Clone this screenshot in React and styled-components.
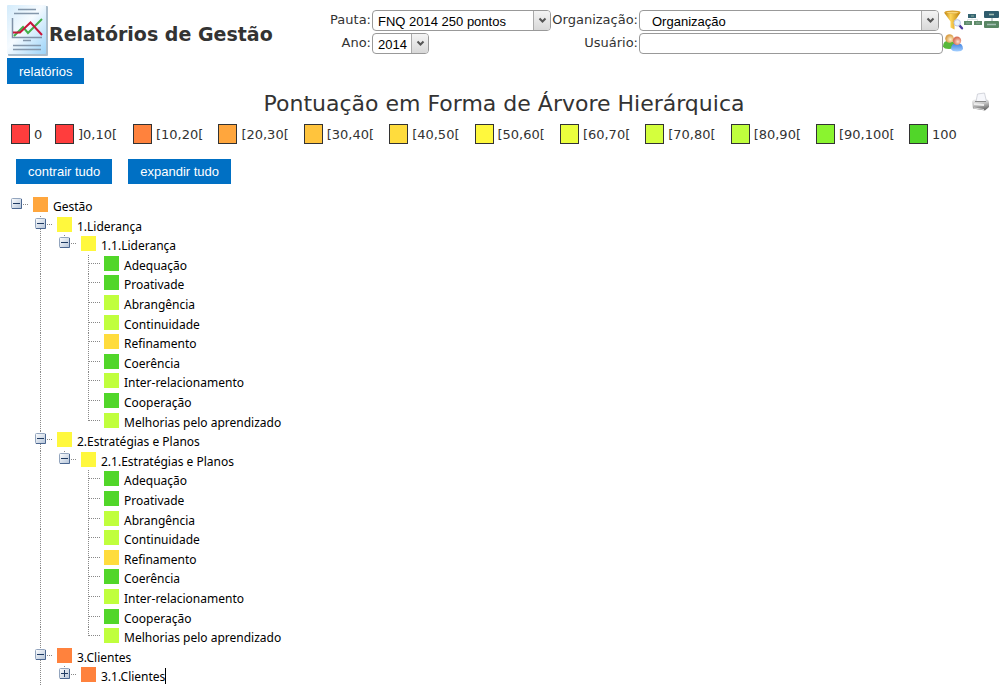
import React, { useState } from 'react';
import styled, { createGlobalStyle } from 'styled-components';

const GlobalStyle = createGlobalStyle`
    body {
        margin: 0;
        background-color: #fff;
        color: #333;
        font-family: Verdana, 'DejaVu Sans', sans-serif;
        font-size: 13px;
    }

    * {
        box-sizing: border-box;
    }
`;

const Page = styled.div`
    padding: 5px 0 0 7px;
`;

const Header = styled.header`
    display: grid;
    grid-template-columns: 320px 1fr;
`;

const Brand = styled.div`
    display: flex;
    align-items: flex-start;
    gap: 1px;
    height: 53px;
`;

const BrandTitle = styled.h1`
    margin: 17px 0 0;
    font-size: 19px;
    line-height: 24px;
    white-space: nowrap;
`;

const Fields = styled.div`
    display: grid;
    grid-template-columns: 44px 181px 86px 1fr;
    grid-auto-rows: 21px;
    gap: 2px 0;
    padding-top: 5px;
`;

const FieldLabel = styled.label`
    line-height: 20px;
    text-align: right;
    white-space: nowrap;
`;

const FieldCell = styled.div`
    display: flex;
    min-width: 0;
    padding-left: 1px;
`;

const SelectBox = styled.div`
    position: relative;
    height: 21px;
    flex: ${(p) => (p.$grow ? '1' : 'none')};
    width: ${(p) => p.$width || 'auto'};
`;

const Select = styled.select`
    appearance: none;
    width: 100%;
    height: 21px;
    margin: 0;
    padding: 1px 20px 0 ${(p) => (p.$indent ? '12px' : '5px')};
    border: 1px solid #999;
    border-radius: 4px;
    background-color: #fff;
    color: #000;
    font-family: 'Liberation Sans', Arial, sans-serif;
    font-size: 13px;
`;

const SelectArrow = styled.span`
    position: absolute;
    top: 1px;
    right: 1px;
    bottom: 1px;
    display: flex;
    align-items: center;
    justify-content: center;
    width: 17px;
    border-left: 1px solid #aaa;
    border-radius: 0 3px 3px 0;
    background: linear-gradient(#f4f4f4, #d8d8d8);
    pointer-events: none;
`;

const TextInput = styled.input`
    flex: 1;
    min-width: 0;
    height: 21px;
    border: 1px solid #999;
    border-radius: 4px;
    background-color: #fff;
`;

const IconGroup = styled.div`
    display: flex;
    align-items: center;
    height: 19px;
    width: ${(p) => p.$width};
    justify-content: ${(p) => (p.$end ? 'flex-end' : 'flex-start')};
`;

const IconButton = styled.button`
    display: flex;
    padding: 0;
    border: none;
    background: none;
    cursor: pointer;
`;

const Button = styled.button`
    height: ${(p) => (p.$menu ? '26px' : '25px')};
    padding: 0 12px;
    border: none;
    background-color: #0070c4;
    color: #fff;
    font-family: 'Liberation Sans', Arial, sans-serif;
    font-size: 13px;
    cursor: pointer;

    &:hover {
        background-color: #005a9e;
    }
`;

const Menu = styled.nav`
    display: flex;
`;

const TitleBar = styled.div`
    display: grid;
    grid-template-columns: 30px 1fr 30px;
    align-items: center;
    height: 40px;
`;

const Title = styled.h2`
    grid-column: 2;
    margin: 0;
    font-size: 22px;
    font-weight: normal;
    line-height: 28px;
    text-align: center;
`;

const PrintLink = styled(IconButton)`
    align-self: start;
    padding-top: 8px;
`;

const Legend = styled.ul`
    display: grid;
    grid-template-columns: 44px 78px repeat(8, 1fr) 93px 85px;
    margin: 0;
    padding: 0 7px 0 4px;
    list-style: none;
`;

const LegendItem = styled.li`
    display: flex;
    align-items: center;
    gap: 4px;
    height: 20px;
    white-space: nowrap;
`;

const LegendColor = styled.span`
    flex: none;
    width: 19px;
    height: 20px;
    border: 1px solid #333;
    background-color: ${(p) => p.$color};
`;

const Actions = styled.div`
    display: flex;
    gap: 16px;
    padding: 15px 9px 12px;
`;

const Tree = styled.ul`
    margin: 0;
    padding: 0 0 0 4px;
    list-style: none;
    color: #000;
    font-family: Tahoma, 'Noto Sans', sans-serif;
    font-size: 12px;
`;

const TreeRow = styled.li`
    display: flex;
    height: 20px;

    &:nth-child(5n + 2),
    &:nth-child(5n + 4) {
        height: 19px;
    }
`;

const IndentCell = styled.span`
    flex: none;
    display: flex;
    width: 24px;
    padding-left: 5px;
`;

const DottedV = styled.span`
    width: 1px;
    flex: ${(p) => p.$size || '1'};
    height: ${(p) => p.$height || 'auto'};
    background: ${(p) => (p.$hidden ? 'none' : 'linear-gradient(#888 1px, transparent 1px) 0 0 / 1px 2px')};
`;

const DottedH = styled.span`
    width: ${(p) => p.$width};
    height: 1px;
    margin-top: 8px;
    background: linear-gradient(90deg, #888 1px, transparent 1px) 0 0 / 2px 1px;
`;

const ToggleCell = styled.span`
    flex: none;
    display: flex;
    width: 22px;
`;

const ToggleColumn = styled.span`
    display: flex;
    flex-direction: column;
    align-items: center;
    width: 11px;
    margin-right: 1px;
`;

const Toggle = styled.button`
    display: flex;
    flex: none;
    width: 11px;
    height: 11px;
    padding: 0;
    border: none;
    background: none;
    cursor: pointer;
`;

const LeafCell = styled.span`
    flex: none;
    display: flex;
    width: 21px;
    padding-left: 5px;
`;

const NodeColor = styled.span`
    flex: none;
    width: 15px;
    height: 15px;
    margin: 1px 5px 0 0;
    background-color: ${(p) => p.$color};
`;

const NodeText = styled.span`
    line-height: 22px;
    white-space: nowrap;
`;

const Caret = styled.span`
    width: 1px;
    height: 16px;
    margin-top: 2px;
    background-color: #000;
`;

const ReportIcon = () => (
    <svg width="41" height="52" viewBox="0 0 41 52" aria-hidden="true">
        <defs>
            <linearGradient id="paper" x1="0" y1="0" x2="1" y2="1">
                <stop offset="0" stopColor="#d3ebfb" />
                <stop offset=".45" stopColor="#f6fbff" />
                <stop offset="1" stopColor="#9bd3f8" />
            </linearGradient>
        </defs>
        <rect x="1" y="1" width="40" height="50" rx="1" fill="#a9bccb" />
        <rect x="0" y="0" width="39" height="49" rx="1" fill="url(#paper)" />
        <path d="M11 4.500h18M7 8.500h25M16 35.500h8M6 40.500h28M6 44.500h28" stroke="#8497ab" strokeWidth="1.500" />
        <path d="M5.500 13v19.500H35" fill="none" stroke="#8092a8" strokeWidth="1.500" />
        <path d="M7 31l9-9 5 6 14-14" fill="none" stroke="#43b049" strokeWidth="2" />
        <path d="M6 27.500h7l10.500-10L35 30" fill="none" stroke="#c9153a" strokeWidth="2" />
    </svg>
);

const FilterIcon = () => (
    <svg width="20" height="20" viewBox="0 0 20 20" aria-hidden="true">
        <defs>
            <linearGradient id="funnel">
                <stop offset="0" stopColor="#b47b0a" />
                <stop offset=".4" stopColor="#ffd65a" />
                <stop offset="1" stopColor="#b87d08" />
            </linearGradient>
        </defs>
        <path d="M0 2.500l6.500 9v6l4 2v-8l6-9z" fill="url(#funnel)" />
        <ellipse cx="8.500" cy="2.300" rx="8" ry="1.700" fill="#d9a02b" />
        <ellipse cx="8.500" cy="2.600" rx="6" ry=".9" fill="#f7d77c" />
        <path d="M15.500 15.500l2.500 2.800" stroke="#4d3c9d" strokeWidth="2.400" strokeLinecap="round" />
        <circle cx="13.200" cy="12.800" r="3.200" fill="#e7f3ff" stroke="#b9c6e8" />
    </svg>
);

const OrgIcon = () => (
    <svg width="20" height="20" viewBox="0 0 20 20" aria-hidden="true">
        <path d="M8 8v2M3.500 11v-1.500h10V11" fill="none" stroke="#dbe4e4" />
        <rect x="4" y="4" width="8" height="4" fill="#356572" />
        <rect x="0" y="11" width="8" height="4" fill="#5e8b68" />
        <rect x="10" y="11" width="8" height="4" fill="#5e8b68" />
        <path d="M7 6h3M2 13h4M12 13h4" stroke="#8fae9f" />
    </svg>
);

const OrgLargeIcon = () => (
    <svg width="17" height="20" viewBox="0 0 17 20" aria-hidden="true">
        <path d="M8 7v5" stroke="#8ba2a0" />
        <rect x="0" y="1" width="15" height="7" rx="1" fill="#2f5c6c" />
        <rect x="0" y="11" width="15" height="7" rx="1" fill="#588663" />
        <path d="M5 4.500h5M3 14.500h9" stroke="#a3bfb3" strokeWidth="1.500" />
    </svg>
);

const UsersIcon = () => (
    <svg width="20" height="18" viewBox="0 0 20 18" aria-hidden="true">
        <defs>
            <radialGradient id="face" cx=".6" cy=".6">
                <stop offset="0" stopColor="#fff0cf" />
                <stop offset="1" stopColor="#dba24d" />
            </radialGradient>
            <radialGradient id="faceFront" cx=".6" cy=".6">
                <stop offset="0" stopColor="#ffe0cf" />
                <stop offset="1" stopColor="#d9735a" />
            </radialGradient>
            <linearGradient id="blueShirt" x1="0" y1="0" x2="0" y2="1">
                <stop offset="0" stopColor="#3d7fe0" />
                <stop offset="1" stopColor="#a4d0ff" />
            </linearGradient>
        </defs>
        <path d="M0 12.500q0-6 6-6t6 6q-1 2.500-6 2.500t-6-2.500z" fill="#57b83c" />
        <circle cx="6.500" cy="4.500" r="4.300" fill="url(#face)" />
        <path d="M8 15q0-6 6-6t6 6q-1 2.500-6 2.500T8 15z" fill="url(#blueShirt)" />
        <circle cx="14" cy="6.800" r="4.200" fill="url(#faceFront)" />
    </svg>
);

const PrinterIcon = () => (
    <svg width="19" height="20" viewBox="0 0 19 20" aria-hidden="true">
        <defs>
            <linearGradient id="printer" x1="0" y1="0" x2=".3" y2="1">
                <stop offset="0" stopColor="#f4f4f4" />
                <stop offset=".5" stopColor="#c4c4c4" />
                <stop offset="1" stopColor="#6e6e6e" />
            </linearGradient>
        </defs>
        <path d="M1 10q0-2 3-2.500h12q2 .5 2 3V15l-4 3.500L2 16.500z" fill="url(#printer)" />
        <path d="M5 9.500L6.500 2l7-1 2 8.500z" fill="#f6f7fb" stroke="#c3c5ce" strokeWidth=".7" />
        <path d="M4 9.500h11" stroke="#8a8a8a" />
        <path d="M3 12l10 1" stroke="#ededed" strokeWidth="2" />
        <path d="M3 16l10 1.500" stroke="#dcdcdc" />
    </svg>
);

const ToggleIcon = ({ open }) => (
    <svg width="11" height="11" viewBox="0 0 11 11" aria-hidden="true">
        <defs>
            <linearGradient id="toggle" x1="0" y1="0" x2="1" y2="1">
                <stop offset="0" stopColor="#fff" />
                <stop offset="1" stopColor="#b3c3d8" />
            </linearGradient>
        </defs>
        <rect x=".5" y=".5" width="10" height="10" rx="1" fill="url(#toggle)" stroke="#93a5be" />
        <path d="M1 10.500h9.500V1" fill="none" stroke="#4a6690" />
        <path d={open ? 'M2 5.500h7' : 'M2 5.500h7M5.500 2v7'} stroke="#1f3b63" />
    </svg>
);

const ArrowIcon = () => (
    <svg width="9" height="7" viewBox="0 0 9 7" aria-hidden="true">
        <path d="M1.500 1.500l3 3 3-3" fill="none" stroke="#555" strokeWidth="2" />
    </svg>
);

const legend = [
    ['0', '#ff3d3d'],
    [']0,10[', '#ff3d3d'],
    ['[10,20[', '#ff823d'],
    ['[20,30[', '#ffa63d'],
    ['[30,40[', '#ffc43d'],
    ['[40,50[', '#ffdc3d'],
    ['[50,60[', '#fff83d'],
    ['[60,70[', '#ebff3d'],
    ['[70,80[', '#d4ff3d'],
    ['[80,90[', '#c0ff3d'],
    ['[90,100[', '#8af42f'],
    ['100', '#51d629'],
];

const GREEN = '#51d629';
const LIME = '#c0ff3d';
const GOLD = '#ffdc3d';
const YELLOW = '#fff83d';
const ORANGE = '#ff823d';

const criteria = (prefix) =>
    [
        ['Adequação', GREEN],
        ['Proativade', GREEN],
        ['Abrangência', LIME],
        ['Continuidade', LIME],
        ['Refinamento', GOLD],
        ['Coerência', GREEN],
        ['Inter-relacionamento', LIME],
        ['Cooperação', GREEN],
        ['Melhorias pelo aprendizado', LIME],
    ].map(([name, color]) => ({ id: `${prefix}-${name}`, name, color }));

const tree = {
    id: 'g',
    name: 'Gestão',
    color: '#ffa63d',
    children: [
        {
            id: '1',
            name: '1.Liderança',
            color: YELLOW,
            children: [{ id: '1.1', name: '1.1.Liderança', color: YELLOW, children: criteria('1.1') }],
        },
        {
            id: '2',
            name: '2.Estratégias e Planos',
            color: YELLOW,
            children: [{ id: '2.1', name: '2.1.Estratégias e Planos', color: YELLOW, children: criteria('2.1') }],
        },
        {
            id: '3',
            name: '3.Clientes',
            color: ORANGE,
            children: [{ id: '3.1', name: '3.1.Clientes', color: ORANGE, caret: true, children: criteria('3.1') }],
        },
    ],
};

// Lista plana das linhas visíveis
const flatten = (node, closed, level = 0, last = true) => {
    const row = { ...node, level, last, open: !closed.includes(node.id) };
    if (!node.children || !row.open) return [row];
    return [
        row,
        ...node.children.flatMap((child, i) =>
            flatten(child, closed, level + 1, i === node.children.length - 1)
        ),
    ];
};

const TreeNode = ({ node, onToggle }) => (
    <TreeRow>
        {Array.from({ length: node.level }, (_, i) => (
            <IndentCell key={i}>{i === 1 && <DottedV $size="none" $height="100%" />}</IndentCell>
        ))}
        {node.children ? (
            <ToggleCell>
                <ToggleColumn>
                    <DottedV $size="0 0 2px" $hidden={node.level === 0} />
                    <Toggle
                        type="button"
                        aria-label={`${node.open ? 'Contrair' : 'Expandir'} ${node.name}`}
                        onClick={() => onToggle(node.id)}
                    >
                        <ToggleIcon open={node.open} />
                    </Toggle>
                    <DottedV $hidden={node.level !== 1} />
                </ToggleColumn>
                <DottedH $width="6px" />
            </ToggleCell>
        ) : (
            <LeafCell>
                <DottedV $size="none" $height={node.last ? '9px' : '100%'} />
                <DottedH $width="12px" />
            </LeafCell>
        )}
        <NodeColor $color={node.color} />
        <NodeText>{node.name}</NodeText>
        {node.caret && <Caret />}
    </TreeRow>
);

const SelectField = ({ id, options, width, grow, indent }) => (
    <SelectBox $width={width} $grow={grow}>
        <Select id={id} $indent={indent}>
            {options.map((option) => (
                <option key={option}>{option}</option>
            ))}
        </Select>
        <SelectArrow>
            <ArrowIcon />
        </SelectArrow>
    </SelectBox>
);

const App = () => {
    const [closed, setClosed] = useState(['3.1']);

    const toggle = (id) =>
        setClosed(closed.includes(id) ? closed.filter((item) => item !== id) : [...closed, id]);

    return (
        <>
            <GlobalStyle />
            <Page>
                <Header>
                    <Brand>
                        <ReportIcon />
                        <BrandTitle>Relatórios de Gestão</BrandTitle>
                    </Brand>
                    <Fields>
                        <FieldLabel htmlFor="pauta">Pauta:</FieldLabel>
                        <FieldCell>
                            <SelectField id="pauta" width="179px" options={['FNQ 2014 250 pontos']} />
                        </FieldCell>
                        <FieldLabel htmlFor="organizacao">Organização:</FieldLabel>
                        <FieldCell>
                            <SelectField id="organizacao" grow indent options={['Organização']} />
                            <IconGroup $width="62px" $end>
                                <IconButton type="button" aria-label="Filtrar">
                                    <FilterIcon />
                                </IconButton>
                                <IconButton type="button" aria-label="Selecionar organização">
                                    <OrgIcon />
                                </IconButton>
                                <IconButton type="button" aria-label="Organograma">
                                    <OrgLargeIcon />
                                </IconButton>
                            </IconGroup>
                        </FieldCell>
                        <FieldLabel htmlFor="ano">Ano:</FieldLabel>
                        <FieldCell>
                            <SelectField id="ano" width="57px" options={['2014']} />
                        </FieldCell>
                        <FieldLabel htmlFor="usuario">Usuário:</FieldLabel>
                        <FieldCell>
                            <TextInput id="usuario" type="text" />
                            <IconGroup $width="58px">
                                <IconButton type="button" aria-label="Selecionar usuário">
                                    <UsersIcon />
                                </IconButton>
                            </IconGroup>
                        </FieldCell>
                    </Fields>
                </Header>
                <Menu>
                    <Button type="button" $menu>relatórios</Button>
                </Menu>
                <TitleBar>
                    <Title>Pontuação em Forma de Árvore Hierárquica</Title>
                    <PrintLink type="button" aria-label="Imprimir">
                        <PrinterIcon />
                    </PrintLink>
                </TitleBar>
                <Legend>
                    {legend.map(([label, color]) => (
                        <LegendItem key={label}>
                            <LegendColor $color={color} />
                            {label}
                        </LegendItem>
                    ))}
                </Legend>
                <Actions>
                    <Button type="button" onClick={() => setClosed(['g', '1', '2', '3', '1.1', '2.1', '3.1'])}>
                        contrair tudo
                    </Button>
                    <Button type="button" onClick={() => setClosed([])}>expandir tudo</Button>
                </Actions>
                <Tree>
                    {flatten(tree, closed).map((node) => (
                        <TreeNode key={node.id} node={node} onToggle={toggle} />
                    ))}
                </Tree>
            </Page>
        </>
    );
};

export default App;
